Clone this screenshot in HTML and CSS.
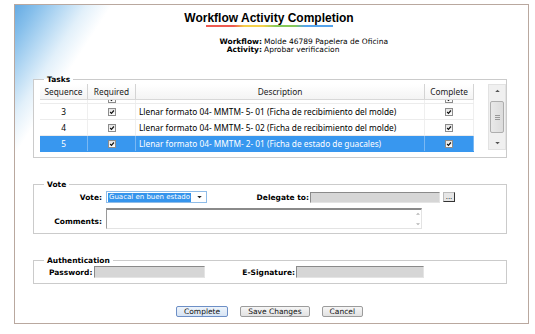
FILE: index.html
```html
<!DOCTYPE html>
<html>
  <head>
    <meta charset="utf-8">
    <link rel="stylesheet" href="styles.css">
  </head>
  <body>
    <div class="frame">
      <div class="header">
        <h1 class="title">Workflow Activity Completion</h1>
        <div class="title_line"></div>
      </div>

      <div class="info">
        <span class="info_label">Workflow:</span><span>Molde 46789 Papelera de Oficina</span>
        <span class="info_label">Activity:</span><span>Aprobar verificacion</span>
      </div>

      <!-- tareas -->
      <fieldset class="box tasks">
        <legend>Tasks</legend>
        <div class="tasks_inner">
          <div class="grid">
            <div class="grid_row grid_head">
              <div>Sequence</div>
              <div>Required</div>
              <div>Description</div>
              <div>Complete</div>
            </div>
            <div class="grid_body">
              <!-- fila cortada por el scroll -->
              <div class="grid_row partial">
                <div></div>
                <div><span class="check"><svg viewBox="0 0 8 8"><path d="M1.5 4 L3.3 5.8 L6.5 2"/></svg></span></div>
                <div class="desc"></div>
                <div><span class="check"><svg viewBox="0 0 8 8"><path d="M1.5 4 L3.3 5.8 L6.5 2"/></svg></span></div>
              </div>
              <div class="grid_row">
                <div>3</div>
                <div><span class="check"><svg viewBox="0 0 8 8"><path d="M1.5 4 L3.3 5.8 L6.5 2"/></svg></span></div>
                <div class="desc">Llenar formato 04- MMTM- 5- 01 (Ficha de recibimiento del molde)</div>
                <div><span class="check"><svg viewBox="0 0 8 8"><path d="M1.5 4 L3.3 5.8 L6.5 2"/></svg></span></div>
              </div>
              <div class="grid_row">
                <div>4</div>
                <div><span class="check"><svg viewBox="0 0 8 8"><path d="M1.5 4 L3.3 5.8 L6.5 2"/></svg></span></div>
                <div class="desc">Llenar formato 04- MMTM- 5- 02 (Ficha de recibimiento del molde)</div>
                <div><span class="check"><svg viewBox="0 0 8 8"><path d="M1.5 4 L3.3 5.8 L6.5 2"/></svg></span></div>
              </div>
              <div class="grid_row selected">
                <div>5</div>
                <div><span class="check"><svg viewBox="0 0 8 8"><path d="M1.5 4 L3.3 5.8 L6.5 2"/></svg></span></div>
                <div class="desc">Llenar formato 04- MMTM- 2- 01 (Ficha de estado de guacales)</div>
                <div><span class="check"><svg viewBox="0 0 8 8"><path d="M1.5 4 L3.3 5.8 L6.5 2"/></svg></span></div>
              </div>
            </div>
          </div>

          <div class="vscroll">
            <svg class="arrow" viewBox="0 0 6 4"><path d="M0 4 L3 1 L6 4 Z"/></svg>
            <div class="thumb"><span></span><span></span><span></span></div>
            <svg class="arrow" viewBox="0 0 6 4"><path d="M0 0 L3 3 L6 0 Z"/></svg>
          </div>
        </div>
      </fieldset>

      <!-- voto -->
      <fieldset class="box vote">
        <legend>Vote</legend>
        <div class="form_row">
          <label class="lbl lbl_left">Vote:</label>
          <div class="select">
            <span class="select_text">Guacal en buen estado</span>
            <svg class="select_arrow" viewBox="0 0 6 4"><path d="M0 0 L3 3 L6 0 Z"/></svg>
          </div>
          <label class="lbl lbl_delegate">Delegate to:</label>
          <div class="field delegate"></div>
          <button class="dots">...</button>
        </div>
        <div class="form_row comments_row">
          <label class="lbl lbl_left">Comments:</label>
          <div class="textarea">
            <div class="mini_scroll">
              <svg viewBox="0 0 6 4"><path d="M0 4 L3 1 L6 4 Z"/></svg>
              <svg viewBox="0 0 6 4"><path d="M0 0 L3 3 L6 0 Z"/></svg>
            </div>
          </div>
        </div>
      </fieldset>

      <!-- autenticacion -->
      <fieldset class="box auth">
        <legend>Authentication</legend>
        <div class="form_row">
          <label class="lbl lbl_pass">Password:</label>
          <div class="field password"></div>
          <label class="lbl lbl_sign">E-Signature:</label>
          <div class="field signature"></div>
        </div>
      </fieldset>

      <div class="buttons">
        <button class="btn btn_default">Complete</button>
        <button class="btn">Save Changes</button>
        <button class="btn">Cancel</button>
      </div>
    </div>
  </body>
</html>
```

FILE: styles.css
```css
body {
    margin: 0;
    font-family: 'DejaVu Sans', sans-serif;
    font-size: 7.5px;
    color: #000;
    background: #fff;
}

.frame {
    box-sizing: border-box;
    width: 515px;
    height: 320px;
    margin: 4px 0 0 14px;
    border: 1px solid #b9a89f;
    /* mancha azul de la esquina */
    background: linear-gradient(123deg, #66abe3 0%, #86bfeb 3%, #b4d8f3 6.5%, #e2f0fa 10%, #ffffff 13.5%, #ffffff 100%);
}

.header {
    padding: 6px 5px 0 0;
}
.title {
    margin: 0;
    font: bold 12px/14px 'Liberation Sans', Arial, sans-serif;
    text-align: center;
}
.title_line {
    width: 127px;
    height: 2px;
    margin: 0 auto;
    background: linear-gradient(90deg, #ee5a50 0%, #ee5a50 22%, #f4d04a 30%, #f4d04a 45%, #86c95a 55%, #86c95a 70%, #55a4ec 78%, #55a4ec 100%);
}

.info {
    display: grid;
    grid-template-columns: 48px auto;
    column-gap: 2px;
    margin: 11px 0 0 199px;
    line-height: 8px;
}
.info_label {
    font-weight: bold;
    text-align: right;
}

/* cajas con leyenda */
.box {
    margin: 0 0 0 18px;
    width: 474px;
    box-sizing: border-box;
    padding: 0;
    border: 1px solid #cbcbcb;
    background: #fff;
}
.box legend {
    margin-left: 10px;
    padding: 0 3px;
    font-weight: bold;
    font-size: 7.5px;
    line-height: 9px;
}

.tasks {
    margin-top: 21px;
}
.tasks_inner {
    display: flex;
    align-items: flex-start;
    gap: 14px;
    padding: 0 0 4px 6px;
}
.grid {
    width: 434px;
    font-family: 'Noto Sans', sans-serif;
    font-size: 8.3px;
}
.grid_row {
    display: grid;
    grid-template-columns: 48px 48px 289px 49px;
    height: 16px;
    box-sizing: border-box;
    border-bottom: 1px solid #ececec;
}
.grid_row > div {
    display: flex;
    align-items: center;
    justify-content: center;
    border-right: 1px solid #efefef;
    white-space: nowrap;
    overflow: hidden;
}
.grid_row > div.desc {
    justify-content: flex-start;
    padding-left: 3px;
}
.grid_head {
    background: linear-gradient(#fff, #f4f4f4);
    border-bottom: 1px solid #d8d8d8;
}
.grid_head > div {
    border-right: 1px solid #d4d4d4;
    color: #222;
}
.grid_body {
    height: 53px;
    overflow: hidden;
}
.grid_row.partial {
    height: 4px;
}
.grid_row.partial > div {
    align-items: flex-end;
}
.selected {
    background: #3897ef;
    color: #fff;
    border-bottom-color: #3897ef;
}
.selected > div {
    border-right-color: #7ab8f3;
}

.check {
    display: inline-block;
    flex: none;
    width: 8px;
    height: 8px;
    box-sizing: border-box;
    border: 1px solid #8c8c8c;
    background: linear-gradient(#e4e4e4, #fff);
}
.check svg {
    display: block;
    width: 6px;
    height: 6px;
}
.check path {
    fill: none;
    stroke: #111;
    stroke-width: 1.6;
}

.vscroll {
    width: 18px;
    height: 66px;
    box-sizing: border-box;
    border: 1px solid #e2e2e2;
    background: #f0f0f0;
    display: flex;
    flex-direction: column;
    align-items: center;
    justify-content: space-between;
    padding: 4px 0;
}
.vscroll .arrow {
    width: 5px;
    height: 3px;
    fill: #555;
}
.thumb {
    width: 14px;
    height: 32px;
    box-sizing: border-box;
    border: 1px solid #aeaeae;
    border-radius: 2px;
    background: linear-gradient(90deg, #e9e9e9, #dcdcdc);
    display: flex;
    flex-direction: column;
    align-items: center;
    justify-content: center;
    gap: 1px;
}
.thumb span {
    width: 5px;
    height: 1px;
    background: #999;
}

/* formulario */
.vote {
    margin-top: 22px;
    padding: 2px 0 4px;
}
.form_row {
    display: flex;
    align-items: center;
}
.lbl {
    font-weight: bold;
    text-align: right;
}
.lbl_left {
    width: 68px;
    margin-right: 4px;
}
.select {
    width: 101px;
    height: 12px;
    box-sizing: border-box;
    border: 1px solid #8fbce8;
    background: #fff;
    display: flex;
    align-items: center;
    justify-content: space-between;
    padding: 0 4px 0 1px;
}
.select_text {
    background: #3594ec;
    color: #fff;
    font-size: 7px;
    line-height: 9px;
    padding: 0 1px;
}
.select_arrow {
    width: 5px;
    height: 3px;
    fill: #222;
}
.lbl_delegate {
    width: 102px;
    margin-right: 1px;
}
.field {
    height: 12px;
    box-sizing: border-box;
    background: #d6d6d6;
    border: 1px solid #e4e4e4;
    border-top-color: #8a8a8a;
    border-left-color: #8a8a8a;
}
.delegate {
    width: 130px;
    height: 11px;
}
.dots {
    margin-left: 3px;
    width: 12px;
    height: 10px;
    padding: 0;
    font: 7px/6px 'DejaVu Sans', sans-serif;
    background: #e6e6e6;
    border: 1px solid #bbb;
    border-right-color: #333;
    border-bottom-color: #333;
    text-align: center;
}
.comments_row {
    margin-top: 5px;
    align-items: flex-end;
}
.comments_row .lbl {
    padding-bottom: 3px;
}
.textarea {
    width: 316px;
    height: 21px;
    box-sizing: border-box;
    border: 1px solid #e3e3e3;
    border-top: 2px solid #8a8a8a;
    border-left-color: #9a9a9a;
    background: #fff;
    display: flex;
    justify-content: flex-end;
}
.mini_scroll {
    width: 7px;
    display: flex;
    flex-direction: column;
    justify-content: space-between;
    align-items: center;
    padding: 2px 0;
}
.mini_scroll svg {
    width: 4px;
    height: 3px;
    fill: #b5b5b5;
}

.auth {
    margin-top: 22px;
    padding: 1px 0 5px;
}
.lbl_pass {
    margin-left: 15px;
    width: 44px;
    text-align: left;
    margin-right: 1px;
}
.password {
    width: 111px;
}
.lbl_sign {
    width: 90px;
    margin-right: 1px;
}
.signature {
    width: 128px;
}

.buttons {
    display: flex;
    justify-content: center;
    gap: 12px;
    margin-top: 22px;
    padding-right: 4px;
}
.btn {
    height: 11px;
    padding: 0 7px;
    font: 7.5px/9px 'DejaVu Sans', sans-serif;
    color: #111;
    background: linear-gradient(#f6f6f6, #e2e2e2);
    border: 1px solid #9c9c9c;
    border-radius: 2px;
}
.btn_default {
    border-color: #6d8fc6;
    background: linear-gradient(#eef4fb, #d7e4f4);
}
```
